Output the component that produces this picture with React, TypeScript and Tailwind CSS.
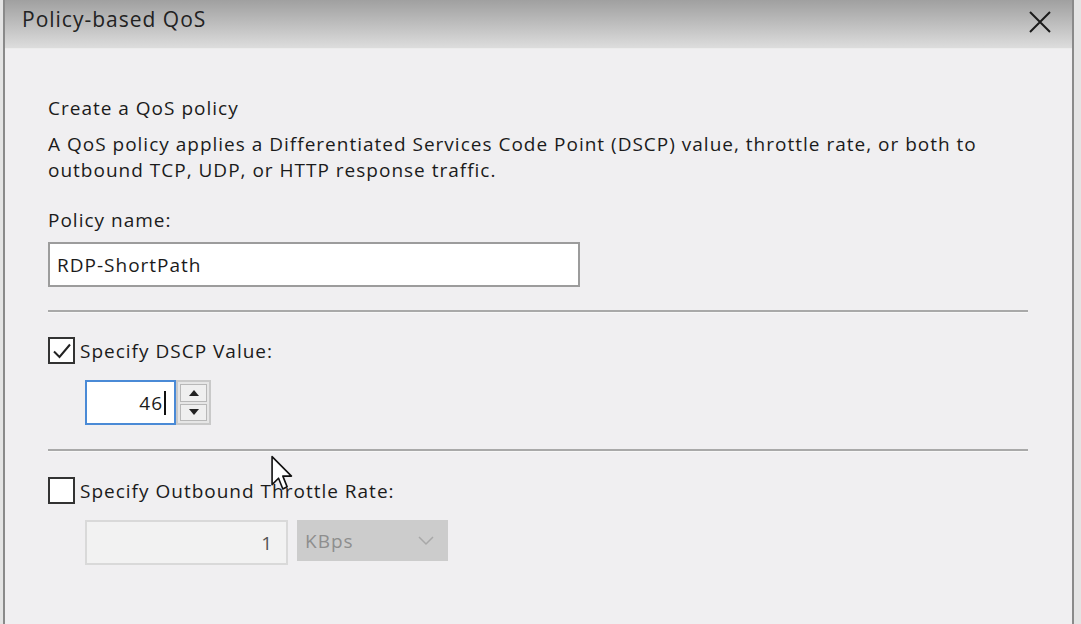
import { useState } from 'react'

const FONT = { fontFamily: '"Open Sans", "Noto Sans", sans-serif' }

function Checkbox({ checked }: { checked: boolean }) {
  return (
    <span className="flex h-[27px] w-[27px] shrink-0 items-center justify-center border-2 border-[#333] bg-white">
      {checked && (
        <svg width="22" height="22" viewBox="0 0 22 22">
          <path d="M3 11.5 L8.5 17 L19 4.5" fill="none" stroke="#222" strokeWidth="2" />
        </svg>
      )}
    </span>
  )
}

function Separator() {
  return <div className="mr-[44px] h-[3px] border-t-2 border-[#a9a9a9] bg-[#f7f7f7]" />
}

export default function App() {
  const [name, setName] = useState('RDP-ShortPath')

  return (
    <div className="relative h-[624px] w-[1081px] overflow-hidden bg-[#e4e4e4] text-[#1b1b1b]" style={FONT}>
      <div className="ml-[3px] flex h-full w-[1071px] flex-col border-x-2 border-[#8a8a8a] bg-[#f0eff1]">
        {/* title bar */}
        <div className="flex h-[49px] shrink-0 items-start justify-between border-b border-[#ececec] bg-gradient-to-b from-[#a0a0a0] to-[#dddddd] pl-[17px] pr-[20px] pt-[4px]">
          <span className="text-[21px] tracking-[1px] text-[#222]">Policy-based QoS</span>
          <svg width="24" height="24" viewBox="0 0 24 24" className="mt-[6px]">
            <path d="M2 2 L22 22 M22 2 L2 22" stroke="#1a1a1a" strokeWidth="2" />
          </svg>
        </div>

        <div className="flex flex-col pl-[43px] pt-[46px] text-[19px] leading-[26px] tracking-[1px]">
          <p>Create a QoS policy</p>
          <p className="mt-[10px]">
            A QoS policy applies a Differentiated Services Code Point (DSCP) value, throttle rate, or both to
            <br />
            outbound TCP, UDP, or HTTP response traffic.
          </p>

          <p className="mt-[24px]">Policy name:</p>
          <input
            value={name}
            onChange={(e) => setName(e.target.value)}
            className="mt-[9px] h-[45px] w-[532px] border-2 border-[#9c9c9c] bg-white px-[7px] text-[19px] tracking-[1px] text-[#1b1b1b] outline-none"
          />

          <div className="mt-[23px]">
            <Separator />
          </div>

          <label className="mt-[24px] flex items-center gap-[5px]">
            <Checkbox checked />
            <span>Specify DSCP Value:</span>
          </label>

          <div className="ml-[37px] mt-[16px] flex">
            <div className="flex h-[45px] w-[91px] items-center justify-end border-2 border-[#4a8ad6] bg-white pr-[8px]">
              <span>46</span>
              <span className="ml-[1px] h-[24px] w-[2px] bg-[#111]" />
            </div>
            <div className="flex h-[45px] w-[35px] flex-col gap-[2px] border-2 border-[#c9c9c9] bg-[#e6e6e6] p-[2px]">
              <div className="flex flex-1 items-center justify-center border border-[#b8b8b8] bg-[#efefef]">
                <svg width="10" height="6" viewBox="0 0 10 6"><path d="M0 6 L5 0 L10 6 Z" fill="#222" /></svg>
              </div>
              <div className="flex flex-1 items-center justify-center border border-[#b8b8b8] bg-[#efefef]">
                <svg width="10" height="6" viewBox="0 0 10 6"><path d="M0 0 L5 6 L10 0 Z" fill="#222" /></svg>
              </div>
            </div>
          </div>

          <div className="mt-[24px]">
            <Separator />
          </div>

          <label className="mt-[25px] flex items-center gap-[5px]">
            <Checkbox checked={false} />
            <span>Specify Outbound Throttle Rate:</span>
          </label>

          <div className="ml-[37px] mt-[16px] flex items-start gap-[9px]">
            <div className="flex h-[45px] w-[203px] items-center justify-end border-2 border-[#d9d9d9] bg-[#f2f2f2] pr-[13px] text-[#555]">
              1
            </div>
            <div className="flex h-[41px] w-[151px] items-center justify-between bg-[#cccccc] pl-[8px] pr-[14px] text-[#8e8e8e]">
              <span>KBps</span>
              <svg width="16" height="10" viewBox="0 0 16 10">
                <path d="M1 1 L8 8 L15 1" fill="none" stroke="#a8a8a8" strokeWidth="1.5" />
              </svg>
            </div>
          </div>
        </div>
      </div>

      {/* mouse pointer */}
      <svg width="28" height="40" viewBox="0 0 26 36" className="absolute left-[271px] top-[455px]">
        <path d="M1 1 L1 27 L7 21 L11 31 L15 29 L11 19 L19 19 Z" fill="#fff" stroke="#111" strokeWidth="1.5" strokeLinejoin="round" />
      </svg>
    </div>
  )
}
